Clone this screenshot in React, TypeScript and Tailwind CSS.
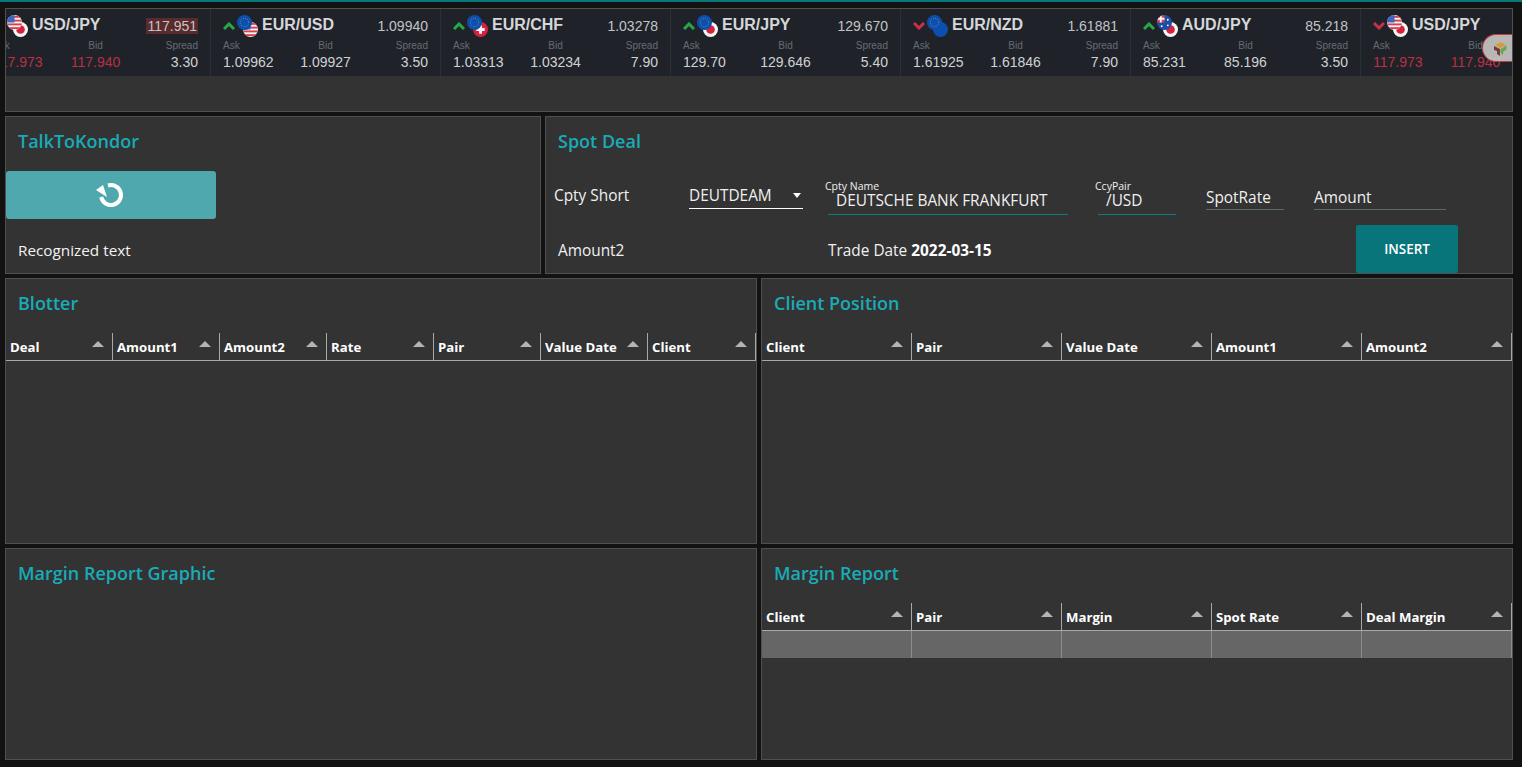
type Flag = "us" | "jp" | "eu" | "ch" | "nz" | "au";

const quotes: {
  pair: string;
  base: Flag;
  quote: Flag;
  dir?: "up" | "down";
  last: string;
  ask: string;
  bid: string;
  spread: string;
}[] = [
  { pair: "EUR/USD", base: "eu", quote: "us", dir: "up", last: "1.09940", ask: "1.09962", bid: "1.09927", spread: "3.50" },
  { pair: "EUR/CHF", base: "eu", quote: "ch", dir: "up", last: "1.03278", ask: "1.03313", bid: "1.03234", spread: "7.90" },
  { pair: "EUR/JPY", base: "eu", quote: "jp", dir: "up", last: "129.670", ask: "129.70", bid: "129.646", spread: "5.40" },
  { pair: "EUR/NZD", base: "eu", quote: "nz", dir: "down", last: "1.61881", ask: "1.61925", bid: "1.61846", spread: "7.90" },
  { pair: "AUD/JPY", base: "au", quote: "jp", dir: "up", last: "85.218", ask: "85.231", bid: "85.196", spread: "3.50" },
];

function Coin({ flag, className }: { flag: Flag; className: string }) {
  return (
    <svg viewBox="0 0 16 16" className={className}>
      <defs>
        <clipPath id={`c-${flag}`}>
          <circle cx="8" cy="8" r="8" />
        </clipPath>
      </defs>
      <g clipPath={`url(#c-${flag})`}>
        {flag === "us" && (
          <>
            <rect width="16" height="16" fill="#f4f4f4" />
            <rect y="1" width="16" height="2" fill="#d8404f" />
            <rect y="5" width="16" height="2" fill="#d8404f" />
            <rect y="9" width="16" height="2" fill="#d8404f" />
            <rect y="13" width="16" height="2" fill="#d8404f" />
            <rect width="8" height="8" fill="#3a66c4" />
          </>
        )}
        {flag === "jp" && (
          <>
            <rect width="16" height="16" fill="#f6f6f6" />
            <circle cx="8" cy="8" r="4.6" fill="#d8203f" />
          </>
        )}
        {flag === "eu" && (
          <>
            <rect width="16" height="16" fill="#0b50b0" />
            <circle cx="8" cy="8" r="4.5" fill="none" stroke="#c9b040" strokeWidth="0.8" strokeDasharray="0.8 1.6" />
          </>
        )}
        {flag === "ch" && (
          <>
            <rect width="16" height="16" fill="#d8203f" />
            <path d="M6.5 3.5h3v3h3v3h-3v3h-3v-3h-3v-3h3z" fill="#f6f6f6" />
          </>
        )}
        {flag === "nz" && <rect width="16" height="16" fill="#0b50b0" />}
        {flag === "au" && (
          <>
            <rect width="16" height="16" fill="#1a4fa8" />
            <rect width="8" height="8" fill="#d8404f" />
            <path d="M0 3h8v2H0zM3 0h2v8H3z" fill="#f4f4f4" />
            <circle cx="11.5" cy="5" r="1" fill="#fff" />
            <circle cx="11.5" cy="11" r="1" fill="#fff" />
            <circle cx="5" cy="12" r="1" fill="#fff" />
          </>
        )}
      </g>
    </svg>
  );
}

function Chevron({ dir }: { dir: "up" | "down" }) {
  return (
    <svg viewBox="0 0 12 8" className="w-3 h-2 shrink-0">
      <path
        d={dir === "up" ? "M1 7l5-5 5 5" : "M1 1l5 5 5-5"}
        fill="none"
        stroke={dir === "up" ? "#27a845" : "#c9304a"}
        strokeWidth="3"
      />
    </svg>
  );
}

function TickerCard({
  pair,
  base,
  quote,
  dir,
  last,
  ask,
  bid,
  spread,
  red,
  lastHighlight,
}: {
  pair: string;
  base: Flag;
  quote: Flag;
  dir?: "up" | "down";
  last: string;
  ask: string;
  bid: string;
  spread: string;
  red?: boolean;
  lastHighlight?: boolean;
}) {
  const valueColor = red ? "text-[#bb2f43]" : "text-[#cfd1d4]";
  return (
    <div className="w-[230px] shrink-0 h-full border-r border-[#2b2f36] pl-3 pr-3 pt-[6px] flex flex-col">
      <div className="flex items-center h-[22px]">
        {dir && <Chevron dir={dir} />}
        <div className="relative w-[22px] h-[22px] ml-[2px] shrink-0">
          <Coin flag={quote} className="absolute left-[6px] top-[7px] w-[15px] h-[15px]" />
          <Coin flag={base} className="absolute left-0 top-0 w-[15px] h-[15px]" />
        </div>
        <span className="ml-[3px] mb-[2px] text-[16px] font-bold text-[#d5d7da]">{pair}</span>
        <span
          className={`ml-auto text-[14px] leading-[16px] text-[#c2c4c8] ${lastHighlight ? "bg-[#5a2a2c] px-[1px]" : ""}`}
        >
          {last}
        </span>
      </div>
      <div className="flex justify-between text-[10px] leading-[12px] text-[#666c74] mt-[3px]">
        <span className="w-[50px]">Ask</span>
        <span className="w-[50px] text-center">Bid</span>
        <span className="w-[50px] text-right">Spread</span>
      </div>
      <div className="flex justify-between text-[14px] leading-[16px] mt-[2px]">
        <span className={`w-[50px] whitespace-nowrap ${valueColor}`}>{ask}</span>
        <span className={`w-[50px] whitespace-nowrap flex justify-center ${valueColor}`}>{bid}</span>
        <span className="w-[50px] text-right text-[#cfd1d4]">{spread}</span>
      </div>
    </div>
  );
}

function Panel({
  title,
  className,
  children,
}: {
  title?: string;
  className: string;
  children?: React.ReactNode;
}) {
  return (
    <section className={`border border-[#505050] bg-[#333333] flex flex-col min-w-0 ${className}`}>
      {title && (
        <h2 className="pl-3 pt-[11px] h-[49px] shrink-0 text-[18px] leading-[26px] font-semibold text-[#19abb7]">
          {title}
        </h2>
      )}
      {children}
    </section>
  );
}

function Grid({ cols, row, template }: { cols: string[]; row?: boolean; template: string }) {
  return (
    <div className="mt-[5px] w-full">
      <div className={`grid ${template} h-[28px] border-b border-[#a8a8a8]`}>
        {cols.map((c) => (
          <div key={c} className="flex items-center pl-1 pr-2 pt-[2px] border-r border-[#a8a8a8]">
            <span className="text-[13.2px] font-bold text-white whitespace-nowrap">{c}</span>
            <span className="ml-auto mb-[8px] w-0 h-0 border-x-[6px] border-x-transparent border-b-[6px] border-b-[#b4b4b4]" />
          </div>
        ))}
      </div>
      {row && (
        <div className={`grid ${template} h-[27px] bg-[#666666]`}>
          {cols.map((c) => (
            <div key={c} className="border-r border-[#8c8c8c]" />
          ))}
        </div>
      )}
    </div>
  );
}

export default function App() {
  return (
    <div className="relative h-[767px] w-[1522px] overflow-hidden bg-[#121212] font-['Open_Sans',sans-serif] text-white">
      <div className="h-[2px] bg-[#08757b]" />
      <div className="flex flex-col gap-1 pl-[5px] pr-[9px] pt-[6px]">
        <Panel className="h-[104px]">
          <div className="relative h-[67px] bg-[#1f2329] flex overflow-hidden font-['Liberation_Sans',sans-serif]">
            <div className="-ml-[25px] flex h-full">
              <TickerCard
                pair="USD/JPY"
                base="us"
                quote="jp"
                dir="down"
                last="117.951"
                ask="117.973"
                bid="117.940"
                spread="3.30"
                red
                lastHighlight
              />
              {quotes.map((q) => (
                <TickerCard key={q.pair} {...q} />
              ))}
              <TickerCard
                pair="USD/JPY"
                base="us"
                quote="jp"
                dir="down"
                last="117.951"
                ask="117.973"
                bid="117.940"
                spread="3.30"
                red
              />
            </div>
            <div className="absolute right-0 top-[25px] w-[30px] h-[28px] rounded-l-[14px] border-y border-l border-[#c03a46] bg-[#d2d2ce]/85">
              <svg viewBox="0 0 16 16" className="absolute left-[9px] top-[6px] w-4 h-4">
                <path d="M2 5l6 3v7l-3-2v-3l-3-1z" fill="#7a3b3b" />
                <path d="M3 4l6-3 5 3-6 3z" fill="#d89a3a" />
                <path d="M8.5 8l6-3.5v4l-3 2-1 4-2-3z" fill="#6aa84f" />
              </svg>
            </div>
          </div>
        </Panel>

        <div className="flex gap-1 h-[158px]">
          <Panel title="TalkToKondor" className="w-[536px]">
            <button className="mt-[5px] h-[48px] w-[210px] rounded-[3px] bg-[#4fa8ad] flex items-center justify-center">
              <svg viewBox="0 0 28 28" className="w-7 h-7 overflow-visible">
                <path d="M11 4.5a10 10 0 1 1-6.8 11.5" fill="none" stroke="#fff" strokeWidth="4" />
                <path d="M-1 9L6 4l4 12z" fill="#fff" />
              </svg>
            </button>
            <p className="pl-3 mt-[21px] text-[15.3px] leading-[20px] text-[#f2f2f2]">Recognized text</p>
          </Panel>

          <Panel title="Spot Deal" className="flex-1">
            <div className="flex items-start mt-[14px] text-[15.4px] text-[#f0f0f0] h-[58px]">
              <span className="ml-2 w-[135px] mt-[4px] leading-[24px]">Cpty Short</span>
              <div className="w-[114px] h-[26px] mt-[3px] border-b border-white flex items-center justify-between pr-[1px]">
                <span>DEUTDEAM</span>
                <span className="w-0 h-0 border-x-[4px] border-x-transparent border-t-[5px] border-t-white mr-[1px]" />
              </div>
              <div className="relative ml-[25px] w-[240px] h-[35px] border-b border-[#0b7c83]">
                <span className="absolute left-[-3px] top-[1px] text-[10.5px] leading-[11px]">Cpty Name</span>
                <span className="absolute left-2 top-[12px] leading-[18px] whitespace-nowrap">DEUTSCHE BANK FRANKFURT</span>
              </div>
              <div className="relative ml-[30px] w-[78px] h-[35px] border-b border-[#0b7c83]">
                <span className="absolute left-[-3px] top-[1px] text-[10.5px] leading-[11px]">CcyPair</span>
                <span className="absolute left-2 top-[12px] leading-[18px]">/USD</span>
              </div>
              <div className="ml-[30px] w-[78px] h-[30px] border-b border-[#5a6a6c] pt-[8px] leading-[20px]">SpotRate</div>
              <div className="ml-[30px] w-[132px] h-[30px] border-b border-[#5a6a6c] pt-[8px] leading-[20px]">Amount</div>
            </div>
            <div className="flex items-start text-[15.4px] text-[#f0f0f0]">
              <span className="ml-3 w-[270px] mt-[3px] leading-[20px]">Amount2</span>
              <span className="mt-[3px] leading-[20px]">
                Trade Date <b className="font-bold text-white">2022-03-15</b>
              </span>
              <button className="ml-auto mr-[54px] -mt-[13px] h-[48px] w-[102px] rounded-[2px] bg-[#08757b] text-[13.4px] font-semibold text-white">
                INSERT
              </button>
            </div>
          </Panel>
        </div>

        <div className="flex gap-1 h-[266px]">
          <Panel title="Blotter" className="w-[752px]">
            <Grid
              template="grid-cols-[107px_107px_107px_107px_107px_107px_108px]"
              cols={["Deal", "Amount1", "Amount2", "Rate", "Pair", "Value Date", "Client"]}
            />
          </Panel>
          <Panel title="Client Position" className="flex-1">
            <Grid
              template="grid-cols-[150px_150px_150px_150px_150px]"
              cols={["Client", "Pair", "Value Date", "Amount1", "Amount2"]}
            />
          </Panel>
        </div>

        <div className="flex gap-1 h-[212px]">
          <Panel title="Margin Report Graphic" className="w-[752px]" />
          <Panel title="Margin Report" className="flex-1">
            <Grid
              template="grid-cols-[150px_150px_150px_150px_150px]"
              cols={["Client", "Pair", "Margin", "Spot Rate", "Deal Margin"]}
              row
            />
          </Panel>
        </div>
      </div>
    </div>
  );
}
